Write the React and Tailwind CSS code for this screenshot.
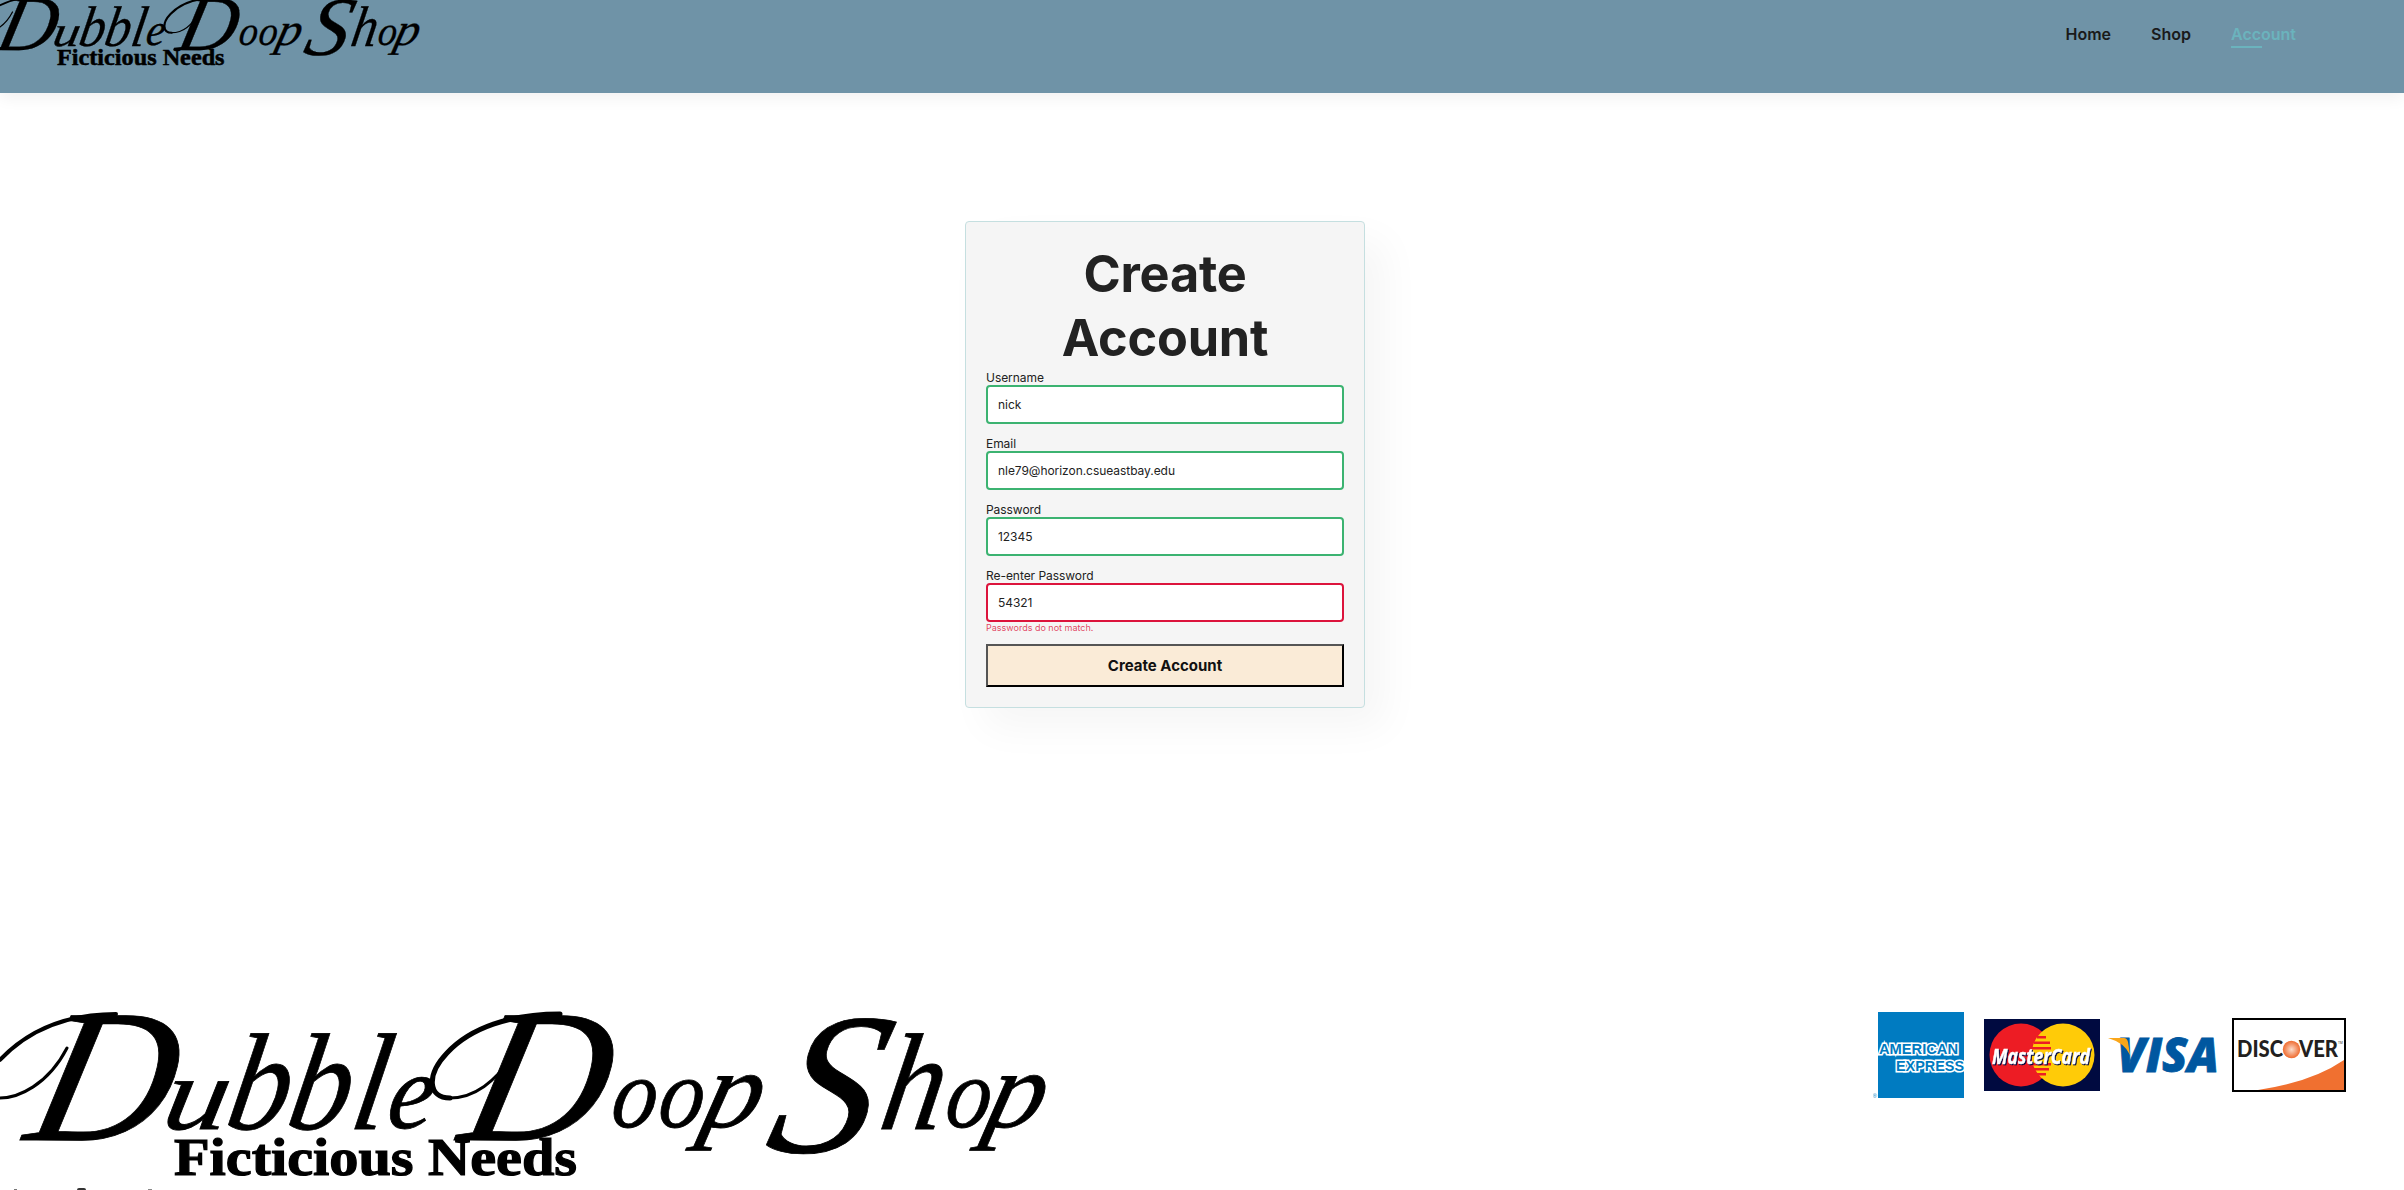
// [letter, x, baseline, font size, horizontal stretch, extra slant in degrees]
const LETTERS = [
  ["D", 22, 1140, 190, 1.03, -13], ["u", 160, 1129, 104, 1.25, -10], ["b", 223, 1129, 138, 0.9, -10],
  ["b", 284, 1129, 138, 0.9, -10], ["l", 348, 1129, 138, 0.9, -10], ["e", 385, 1128, 108, 0.95, -8],
  ["D", 456, 1140, 190, 1.03, -13], ["o", 609, 1127, 100, 0.9, -8], ["o", 656, 1127, 100, 0.9, -8],
  ["p", 698, 1127, 110, 1.06, -14], ["S", 762, 1152, 202, 1.02, -15], ["h", 877, 1129, 138, 0.9, -10],
  ["o", 943, 1127, 100, 0.9, -8], ["p", 982, 1127, 110, 1.04, -14],
];

function Logo({ className }) {
  return (
    <svg className={className} viewBox="0 1000 1060 190" aria-label="Dubble Doop Shop" overflow="visible">
      <g fontFamily="'Liberation Serif', serif" fontStyle="italic" fill="#000" stroke="#000" strokeWidth="0.8">
        {LETTERS.map(([c, x, y, s, w, k], i) => (
          <text key={i} fontSize={s} transform={`translate(${x} ${y}) skewX(${k}) scale(${w} 1)`}>{c}</text>
        ))}
      </g>
      <g fill="none" stroke="#000" strokeLinecap="round">
        <path d="M67 1048C48 1085 18 1098 0 1098" strokeWidth="3" />
        <path d="M0 1060C30 1028 70 1014 116 1014" strokeWidth="4" />
        <path d="M516 1048C497 1084 472 1098 450 1098" strokeWidth="3" />
        <path d="M450 1098C428 1098 426 1075 447 1053C470 1028 510 1014 560 1014" strokeWidth="5" />
      </g>
      <text x="174" y="1174.500" fontSize="53" fontWeight="700" fontFamily="'Liberation Serif', serif" fill="#000" stroke="#000" strokeWidth="1.200" textLength="403" lengthAdjust="spacingAndGlyphs">
        Ficticious Needs
      </text>
    </svg>
  );
}

function Field({ label, value, error }) {
  return (
    <div className="h-[66px]">
      <label className="block h-[15px] text-[12px] leading-[15px] tracking-[-0.05px]">{label}</label>
      <input
        className={`block h-[39px] w-full rounded-[4px] border-2 bg-white px-[10px] text-[12px] tracking-[-0.05px] outline-none ${error ? "border-[#dc143c]" : "border-[#3cb371]"}`}
        defaultValue={value}
      />
      {error && <small className="block text-[9px] leading-[12px] text-[#dc143c]/80">{error}</small>}
    </div>
  );
}

function Amex() {
  return (
    <svg className="h-[90px] w-[92px]" viewBox="0 0 92 90">
      <rect x="5" y="2" width="86" height="86" fill="#007bc1" />
      <g fontFamily="'Liberation Sans', sans-serif" fontWeight="700" fontSize="16" fill="#007bc1" stroke="#fff" strokeWidth="3.4" paintOrder="stroke" strokeLinejoin="miter">
        <text transform="translate(6 43.500) scale(1 0.95)" textLength="79" lengthAdjust="spacingAndGlyphs">AMERICAN</text>
        <text transform="translate(23 61) scale(1 0.95)" textLength="68" lengthAdjust="spacingAndGlyphs">EXPRESS</text>
      </g>
      <text x="-0.500" y="88" fontSize="6" fontFamily="'Liberation Sans', sans-serif" fill="#007bc1">®</text>
    </svg>
  );
}

function MasterCard() {
  return (
    <svg className="ml-[19px] h-[72px] w-[116px]" viewBox="0 0 116 72">
      <rect width="116" height="72" fill="#000a40" />
      <circle cx="37" cy="36" r="31.500" fill="#ed1c24" />
      <circle cx="79" cy="36" r="31.500" fill="#ffcb08" />
      <g fill="#ed1c24">
        <rect x="53" y="17" width="9" height="2.500" /><rect x="50" y="22.500" width="16" height="2.500" />
        <rect x="48" y="28" width="19" height="2.500" /><rect x="48" y="44" width="19" height="2.500" />
        <rect x="50" y="49" width="15" height="2.500" /><rect x="53" y="54" width="9" height="2.500" />
      </g>
      <g className="drop-shadow-[1.5px_1.5px_0_#000a40]">
        <text x="8" y="44.500" fontFamily="'Open Sans', sans-serif" fontWeight="700" fontStyle="italic" fontSize="21.500" textLength="98" lengthAdjust="spacingAndGlyphs" fill="#fff" stroke="#fff" strokeWidth="0.5">MasterCard</text>
      </g>
    </svg>
  );
}

function Visa() {
  return (
    <svg className="ml-[8px] h-[40px] w-[110px]" viewBox="0 0 110 40">
      <text x="9" y="37" fontFamily="'Open Sans', sans-serif" fontWeight="800" fontStyle="italic" fontSize="47" fill="#0057a0" stroke="#0057a0" strokeWidth="0.8" textLength="102" lengthAdjust="spacingAndGlyphs">VISA</text>
      <path d="M0 3H16Q19 3 20 7L22 20Q17 8 0 3Z" fill="#faa61a" />
    </svg>
  );
}

function Discover() {
  return (
    <svg className="ml-[14px] h-[74px] w-[114px]" viewBox="0 0 114 74">
      <defs>
        <radialGradient id="discover-orb">
          <stop offset="0" stopColor="#fbdccb" /><stop offset="1" stopColor="#ef6b2f" />
        </radialGradient>
      </defs>
      <rect x="1" y="1" width="112" height="72" fill="#fff" stroke="#000" strokeWidth="2" />
      <path d="M112 42Q80 64 26 72H112Z" fill="#f07030" />
      <g fontFamily="Lato, sans-serif" fontWeight="900" fontSize="22.500" fill="#231f20">
        <text x="5" y="39" textLength="46" lengthAdjust="spacingAndGlyphs">DISC</text>
        <text x="67" y="39" textLength="39" lengthAdjust="spacingAndGlyphs">VER</text>
      </g>
      <text x="106" y="26" fontSize="3" fill="#231f20">TM</text>
      <circle cx="59.500" cy="31.500" r="8.700" fill="url(#discover-orb)" />
    </svg>
  );
}

export default function App() {
  return (
    <div className="flex h-[1190px] w-full flex-col overflow-hidden bg-white font-['Inter',sans-serif] text-[#222]">
      <header className="flex h-[93px] shrink-0 justify-between bg-[#6f93a7] shadow-[0_5px_15px_rgba(0,0,0,0.06)]">
        <Logo className="-mt-[8px] -ml-[16px] h-[79px] w-[442px] shrink-0" />
        <nav className="mr-[108px] flex gap-[40px] pt-[22px] text-[16px] leading-6 font-semibold text-[#1a1a1a]">
          <a>Home</a>
          <a>Shop</a>
          <a className="relative text-[#6bb3bd]">
            Account
            <span className="absolute top-6 left-0 h-[2px] w-[31px] bg-[#6bb3bd]" />
          </a>
        </nav>
      </header>

      <main className="ml-[965px] pt-[128px]">
        <form className="h-[487px] w-[400px] rounded-[4px] border border-[#c5dfe0] bg-[#f5f5f5] p-5 shadow-[20px_20px_40px_rgba(0,0,0,0.04)]">
          <h1 className="text-center text-[50.4px] leading-[64px] font-bold tracking-[-0.2px]">Create<br />Account</h1>
          <Field label="Username" value="nick" />
          <Field label="Email" value="nle79@horizon.csueastbay.edu" />
          <Field label="Password" value="12345" />
          <Field label="Re-enter Password" value="54321" error="Passwords do not match." />
          <button type="button" className="mt-[10px] block h-[43px] w-full border-2 border-t-[#555] border-r-black border-b-black border-l-[#555] bg-[#faebd7] pt-[2px] text-[15px] font-bold text-[#111]">
            Create Account
          </button>
        </form>
      </main>

      <footer className="mt-auto flex h-[190px] shrink-0 flex-col">
        <div className="flex h-[188px] justify-between">
          <Logo className="h-[190px] w-[1060px] shrink-0" />
          <div className="mr-[58px] flex h-[110px] items-center">
            <Amex /><MasterCard /><Visa /><Discover />
          </div>
        </div>
        <div className="flex h-[2px] items-end pl-[14px]">
          <span className="h-px w-[3px] bg-[#777]" />
          <span className="ml-[60px] h-[2px] w-[9px] rounded-t-full bg-[#333]" />
          <span className="ml-[62px] h-px w-[4px] bg-[#888]" />
        </div>
      </footer>
    </div>
  );
}
